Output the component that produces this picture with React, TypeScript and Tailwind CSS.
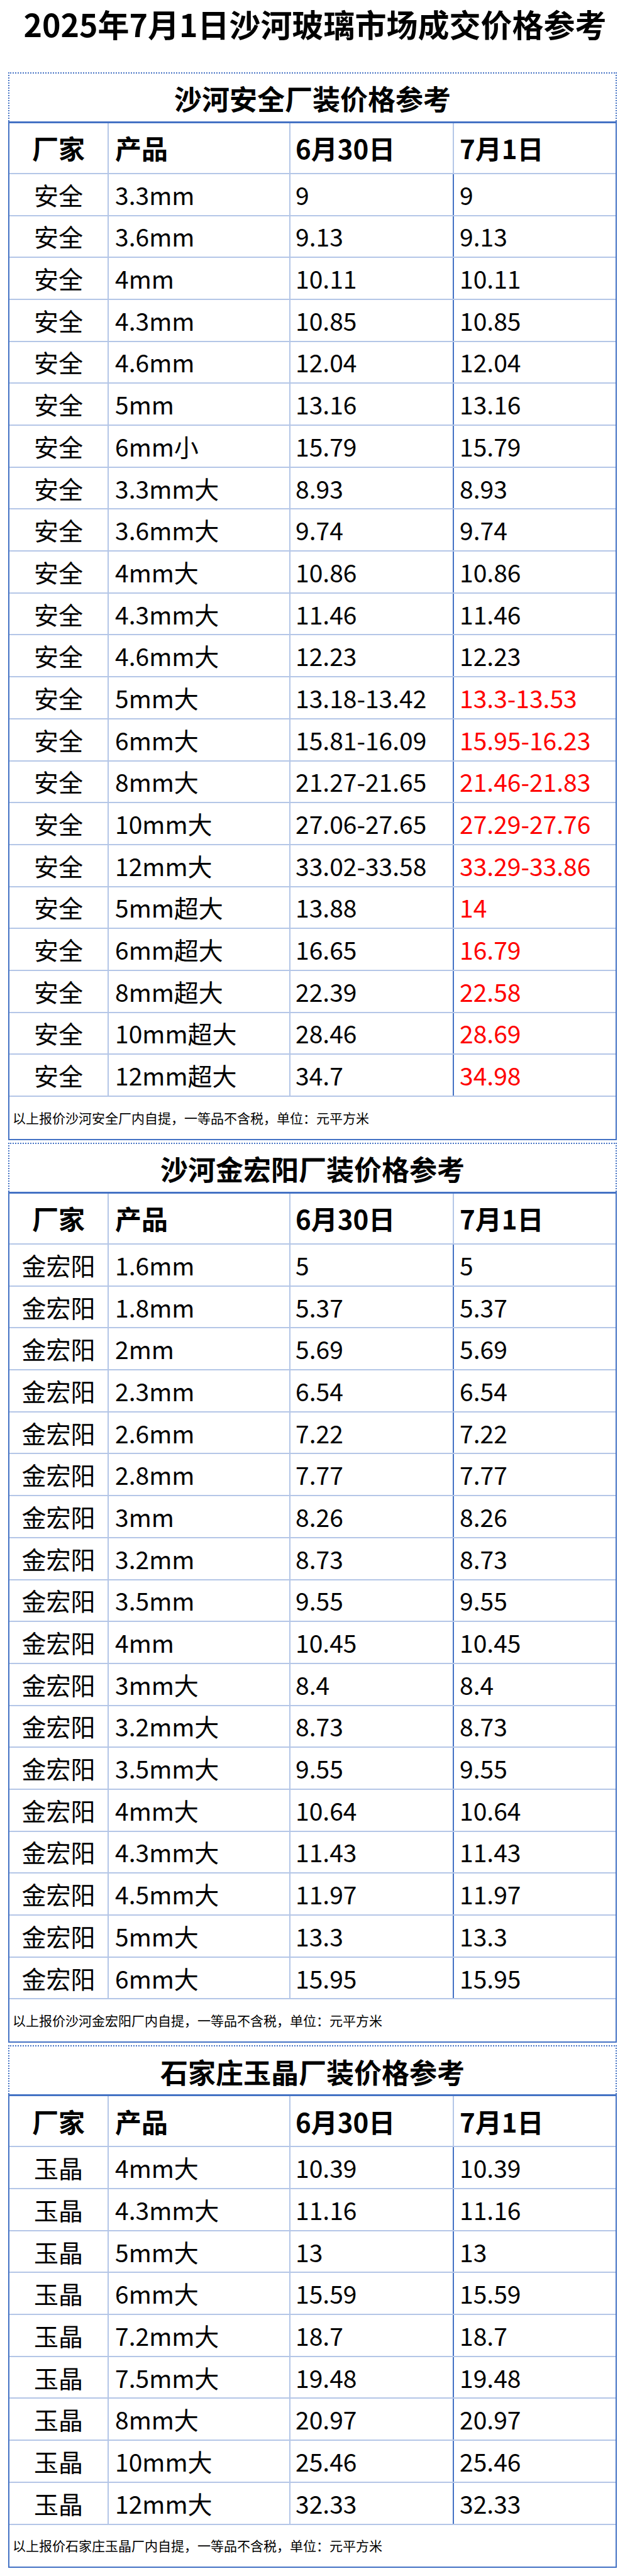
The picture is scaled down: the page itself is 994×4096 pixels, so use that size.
import React from "react";

type Row = [string, string, string, string, boolean?];

type Section = {
  title: string;
  note: string;
  rows: Row[];
};

const sections: Section[] = [
  {
    title: "沙河安全厂装价格参考",
    note: "以上报价沙河安全厂内自提，一等品不含税，单位：元平方米",
    rows: [
      ["安全", "3.3mm", "9", "9"],
      ["安全", "3.6mm", "9.13", "9.13"],
      ["安全", "4mm", "10.11", "10.11"],
      ["安全", "4.3mm", "10.85", "10.85"],
      ["安全", "4.6mm", "12.04", "12.04"],
      ["安全", "5mm", "13.16", "13.16"],
      ["安全", "6mm小", "15.79", "15.79"],
      ["安全", "3.3mm大", "8.93", "8.93"],
      ["安全", "3.6mm大", "9.74", "9.74"],
      ["安全", "4mm大", "10.86", "10.86"],
      ["安全", "4.3mm大", "11.46", "11.46"],
      ["安全", "4.6mm大", "12.23", "12.23"],
      ["安全", "5mm大", "13.18-13.42", "13.3-13.53", true],
      ["安全", "6mm大", "15.81-16.09", "15.95-16.23", true],
      ["安全", "8mm大", "21.27-21.65", "21.46-21.83", true],
      ["安全", "10mm大", "27.06-27.65", "27.29-27.76", true],
      ["安全", "12mm大", "33.02-33.58", "33.29-33.86", true],
      ["安全", "5mm超大", "13.88", "14", true],
      ["安全", "6mm超大", "16.65", "16.79", true],
      ["安全", "8mm超大", "22.39", "22.58", true],
      ["安全", "10mm超大", "28.46", "28.69", true],
      ["安全", "12mm超大", "34.7", "34.98", true],
    ],
  },
  {
    title: "沙河金宏阳厂装价格参考",
    note: "以上报价沙河金宏阳厂内自提，一等品不含税，单位：元平方米",
    rows: [
      ["金宏阳", "1.6mm", "5", "5"],
      ["金宏阳", "1.8mm", "5.37", "5.37"],
      ["金宏阳", "2mm", "5.69", "5.69"],
      ["金宏阳", "2.3mm", "6.54", "6.54"],
      ["金宏阳", "2.6mm", "7.22", "7.22"],
      ["金宏阳", "2.8mm", "7.77", "7.77"],
      ["金宏阳", "3mm", "8.26", "8.26"],
      ["金宏阳", "3.2mm", "8.73", "8.73"],
      ["金宏阳", "3.5mm", "9.55", "9.55"],
      ["金宏阳", "4mm", "10.45", "10.45"],
      ["金宏阳", "3mm大", "8.4", "8.4"],
      ["金宏阳", "3.2mm大", "8.73", "8.73"],
      ["金宏阳", "3.5mm大", "9.55", "9.55"],
      ["金宏阳", "4mm大", "10.64", "10.64"],
      ["金宏阳", "4.3mm大", "11.43", "11.43"],
      ["金宏阳", "4.5mm大", "11.97", "11.97"],
      ["金宏阳", "5mm大", "13.3", "13.3"],
      ["金宏阳", "6mm大", "15.95", "15.95"],
    ],
  },
  {
    title: "石家庄玉晶厂装价格参考",
    note: "以上报价石家庄玉晶厂内自提，一等品不含税，单位：元平方米",
    rows: [
      ["玉晶", "4mm大", "10.39", "10.39"],
      ["玉晶", "4.3mm大", "11.16", "11.16"],
      ["玉晶", "5mm大", "13", "13"],
      ["玉晶", "6mm大", "15.59", "15.59"],
      ["玉晶", "7.2mm大", "18.7", "18.7"],
      ["玉晶", "7.5mm大", "19.48", "19.48"],
      ["玉晶", "8mm大", "20.97", "20.97"],
      ["玉晶", "10mm大", "25.46", "25.46"],
      ["玉晶", "12mm大", "32.33", "32.33"],
    ],
  },
];

const rijRaster = "grid grid-cols-[156px_289px_260px_1fr]";

function PrijsTabel({ section }: { section: Section }) {
  return (
    <div className="mt-[4px] first:mt-0">
      <div className="flex h-[78px] items-center justify-center border-2 border-b-0 border-dotted border-[#4472C4] pt-[3px] text-[44px] font-bold leading-none">
        {section.title}
      </div>
      <div className="h-[3px] bg-[#4472C4]" />

      <div className="border-x-2 border-b-2 border-[#4472C4]">
        <div className={`${rijRaster} h-[81.3px] border-b-2 border-[#B4C6E7] text-[42px] font-bold leading-none`}>
          <div className="flex items-center justify-center">厂家</div>
          <div className="flex items-center border-l-2 border-[#B4C6E7] pl-[10px]">产品</div>
          <div className="flex items-center border-l-2 border-[#B4C6E7] pl-[8px]">6月30日</div>
          <div className="flex items-center border-l-2 border-[#B4C6E7] pl-[9px]">7月1日</div>
        </div>

        {section.rows.map(([fabriek, product, oud, nieuw, rood], index) => (
          <div
            key={index}
            className={`${rijRaster} h-[66.7px] border-b-2 border-[#B4C6E7] text-[39px] leading-none`}
          >
            <div className="flex items-center justify-center">{fabriek}</div>
            <div className="flex items-center border-l-2 border-[#B4C6E7] pl-[10px]">{product}</div>
            <div className="flex items-center border-l-2 border-[#B4C6E7] pl-[8px]">{oud}</div>
            <div
              className={`flex items-center border-l-2 border-[#4472C4] pl-[9px] ${
                rood ? "text-[#FF0000]" : ""
              }`}
            >
              {nieuw}
            </div>
          </div>
        ))}

        <div className="flex h-[66.7px] items-center pl-[5px] text-[21px] leading-none">
          {section.note}
        </div>
      </div>
    </div>
  );
}

export default function App() {
  return (
    <div className="w-[994px] bg-white pb-[12px] font-['Noto_Sans_CJK_SC','Noto_Sans',sans-serif] text-black">
      <div className="flex h-[73px] items-center justify-center pl-[8px] text-[50px] font-bold leading-none">
        2025年7月1日沙河玻璃市场成交价格参考
      </div>

      <div className="ml-[13px] mt-[41.6px] w-[968px]">
        {sections.map((section) => (
          <PrijsTabel key={section.title} section={section} />
        ))}
      </div>
    </div>
  );
}
